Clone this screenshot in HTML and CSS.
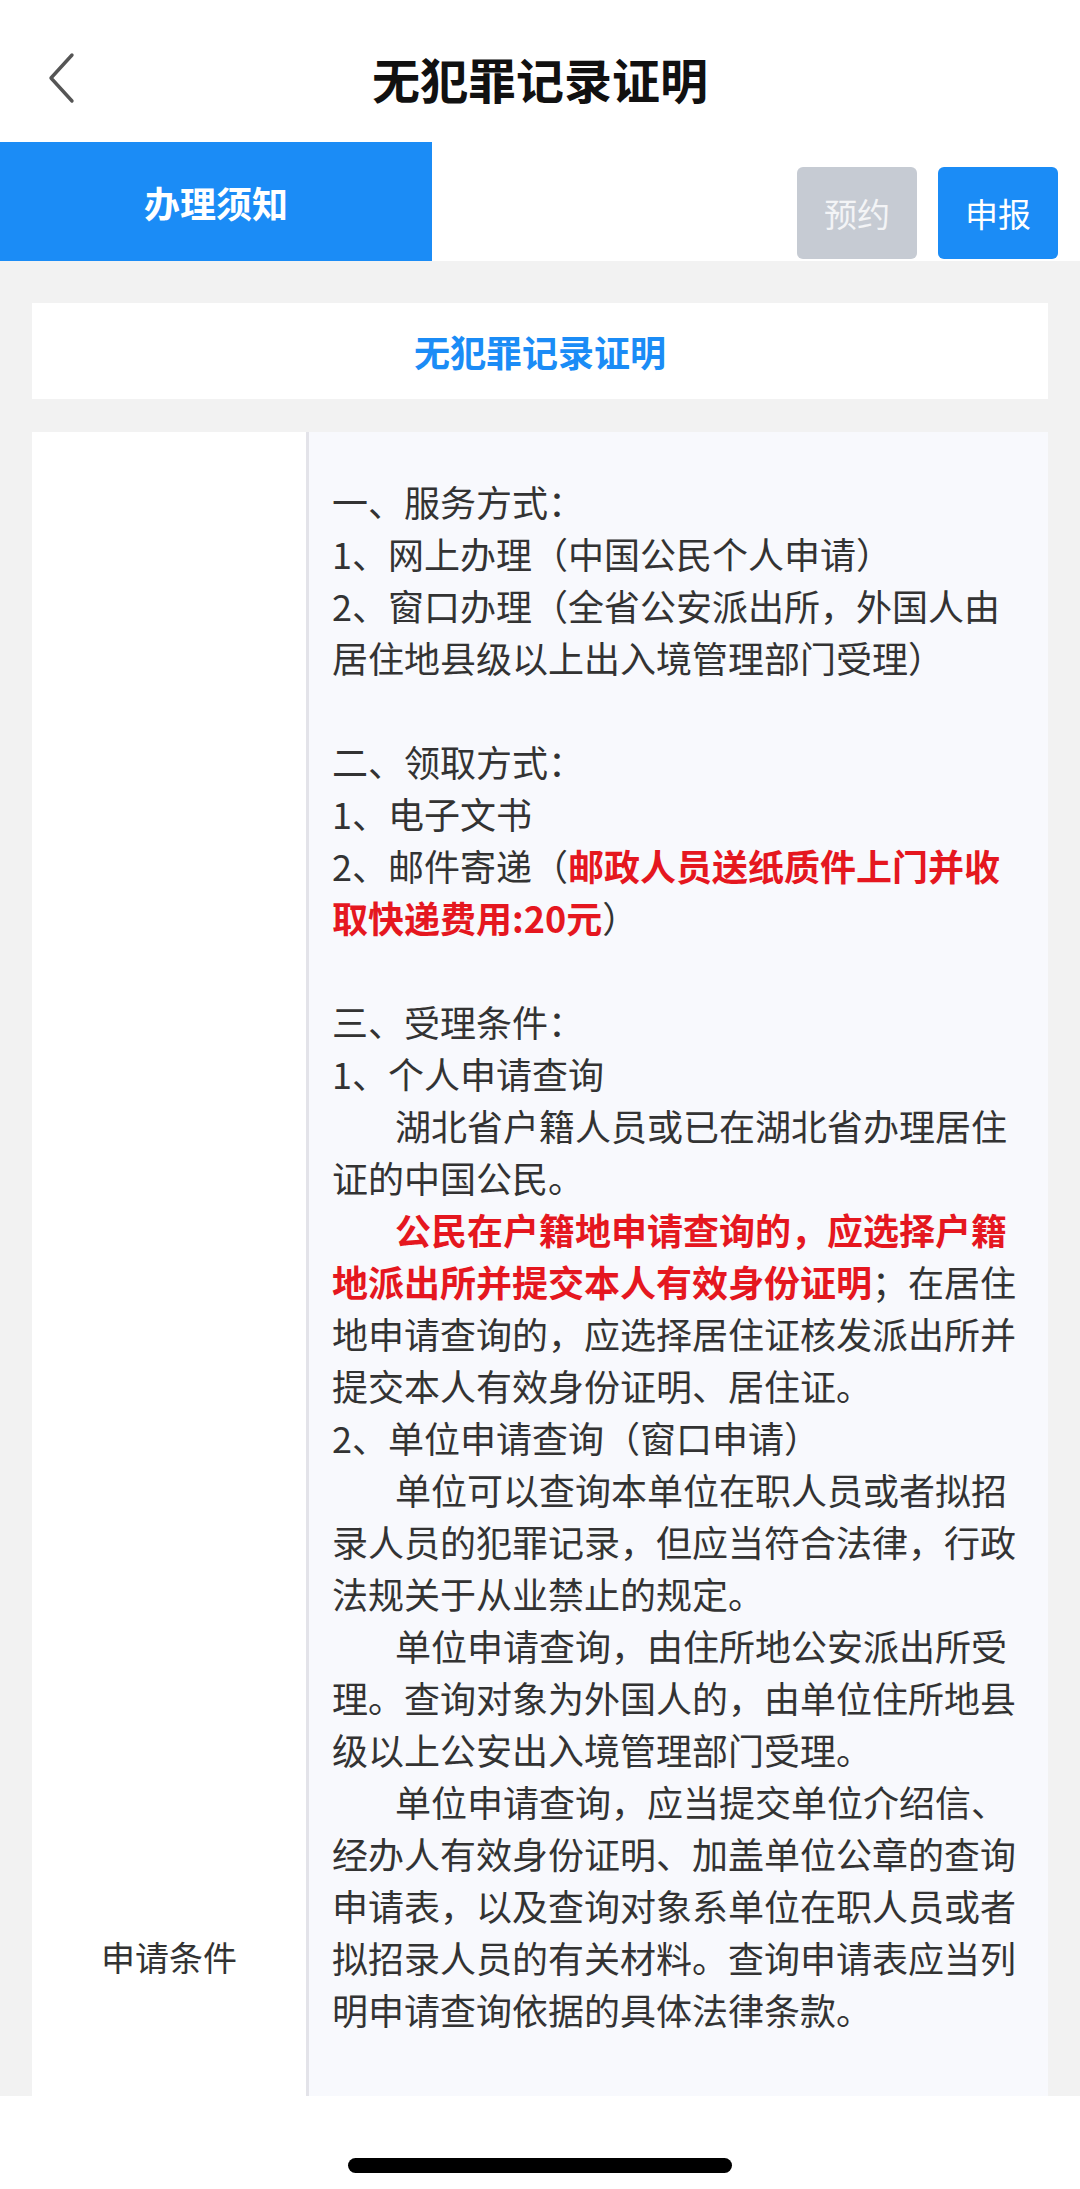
FILE: index.html
```html
<!DOCTYPE html>
<html lang="zh-CN">
<head>
<meta charset="utf-8">
<title>无犯罪记录证明</title>
<link rel="stylesheet" href="styles.css">
</head>
<body>
<header class="header">
  <div class="back">
    <svg width="30" height="52" viewBox="0 0 30 52"><path d="M25 3 L4 26 L25 49" fill="none" stroke="#555" stroke-width="3.4" stroke-linecap="round" stroke-linejoin="round"/></svg>
  </div>
  <h1 class="title">无犯罪记录证明</h1>
  <div class="spacer"></div>
</header>
<nav class="tabbar">
  <div class="tab">办理须知</div>
  <div class="actions">
    <button class="btn btn-gray">预约</button>
    <button class="btn btn-blue">申报</button>
  </div>
</nav>
<main class="main">
  <div class="card">无犯罪记录证明</div>
  <div class="table">
    <div class="label">申请条件</div>
    <div class="content">
      <p>一、服务方式：</p>
      <p>1、网上办理（中国公民个人申请）</p>
      <p>2、窗口办理（全省公安派出所，外国人由居住地县级以上出入境管理部门受理）</p>
      <p class="blank"></p>
      <p>二、领取方式：</p>
      <p>1、电子文书</p>
      <p>2、邮件寄递（<b class="red">邮政人员送纸质件上门并收取快递费用:20元</b>）</p>
      <p class="blank"></p>
      <p>三、受理条件：</p>
      <p>1、个人申请查询</p>
      <p class="ind">湖北省户籍人员或已在湖北省办理居住证的中国公民。</p>
      <p class="ind"><b class="red">公民在户籍地申请查询的，应选择户籍地派出所并提交本人有效身份证明</b>；在居住地申请查询的，应选择居住证核发派出所并提交本人有效身份证明、居住证。</p>
      <p>2、单位申请查询（窗口申请）</p>
      <p class="ind">单位可以查询本单位在职人员或者拟招录人员的犯罪记录，但应当符合法律，行政法规关于从业禁止的规定。</p>
      <p class="ind">单位申请查询，由住所地公安派出所受理。查询对象为外国人的，由单位住所地县级以上公安出入境管理部门受理。</p>
      <p class="ind">单位申请查询，应当提交单位介绍信、经办人有效身份证明、加盖单位公章的查询申请表，以及查询对象系单位在职人员或者拟招录人员的有关材料。查询申请表应当列明申请查询依据的具体法律条款。</p>
      <p class="blank"></p>
      <p>四、申请材料：</p>
      <p>1、个人申请查询</p>
      <p class="ind">本人有效身份证明；在居住地申请查询的，还应当提交居住证。</p>
      <p>2、单位申请查询</p>
      <p class="ind">单位介绍信、经办人有效身份证明、加盖单位公章的查询申请表，以及查询对象系单位在职人员或者拟招录人员的有关材料。</p>
      <p class="blank"></p>
      <p>五、办理时限：</p>
      <p class="ind">对于符合受理条件的申请，公安派出所当场出具查询结果；需要进一步核查的，在三个工作日内出具。</p>
      <p class="blank"></p>
      <p>六、收费标准：</p>
      <p class="ind">不收费。选择邮件寄递的，快递费用由申请人承担。</p>
      <p class="blank"></p>
      <p>七、注意事项：</p>
      <p class="ind">申请人应当如实提供申请材料，并对材料的真实性负责。查询结果仅反映查询时点的记录情况。</p>
    </div>
  </div>
</main>
<div class="homebar"><span class="pill"></span></div>
</body>
</html>
```

FILE: styles.css
```css
* { box-sizing: border-box; }
html, body { margin: 0; padding: 0; }
body {
  width: 1080px;
  background: #f2f2f2;
  font-family: "Noto Sans CJK SC", "Noto Sans", sans-serif;
  color: #333;
}
.header {
  height: 142px;
  padding: 34px 0 20px;
  background: #fff;
  display: grid;
  grid-template-columns: 1fr auto 1fr;
  align-items: center;
}
.back {
  padding-left: 47px;
  display: flex;
  align-items: center;
}
.back svg { display: block; }
.title {
  margin: 0;
  font-size: 48px;
  font-weight: 600;
  color: #111;
  line-height: 1;
  letter-spacing: 0;
}
.tabbar {
  height: 119px;
  background: #fff;
  display: flex;
  justify-content: space-between;
}
.tab {
  width: 432px;
  background: #1b8cf6;
  color: #fff;
  font-size: 36px;
  font-weight: 700;
  display: flex;
  align-items: center;
  justify-content: center;
}
.actions {
  display: flex;
  gap: 21px;
  padding-right: 22px;
  align-self: flex-end;
  margin-bottom: 2px;
}
.btn {
  width: 120px;
  height: 92px;
  border: 0;
  border-radius: 6px;
  font-family: inherit;
  font-size: 33px;
  color: #fff;
  padding: 0;
}
.btn-gray { background: #c6cbd3; color: #f3f4f6; }
.btn-blue { background: #1b8cf6; }
.main {
  padding: 42px 32px 0;
}
.card {
  height: 96px;
  background: #fff;
  color: #1b8cf6;
  font-size: 36px;
  font-weight: 700;
  display: flex;
  align-items: center;
  justify-content: center;
}
.table {
  margin-top: 33px;
  display: grid;
  grid-template-columns: 277px 1fr;
  background: #fff;
}
.label {
  border-right: 3px solid #e3e3e9;
  font-size: 34px;
  color: #333;
  display: flex;
  align-items: center;
  justify-content: center;
}
.content {
  background: #f8f9fd;
  padding: 43px 23px 250px;
  font-size: 36px;
  line-height: 52px;
}
.content p { margin: 0; }
.content .blank { height: 52px; }
.content .ind { text-indent: 63px; }
.red { color: #e5171f; font-weight: 700; }
.homebar {
  position: fixed;
  left: 0;
  right: 0;
  bottom: 0;
  height: 93px;
  background: #fff;
  display: flex;
  justify-content: center;
}
.pill {
  margin-top: 62px;
  width: 384px;
  height: 15px;
  border-radius: 8px;
  background: #000;
}
```
